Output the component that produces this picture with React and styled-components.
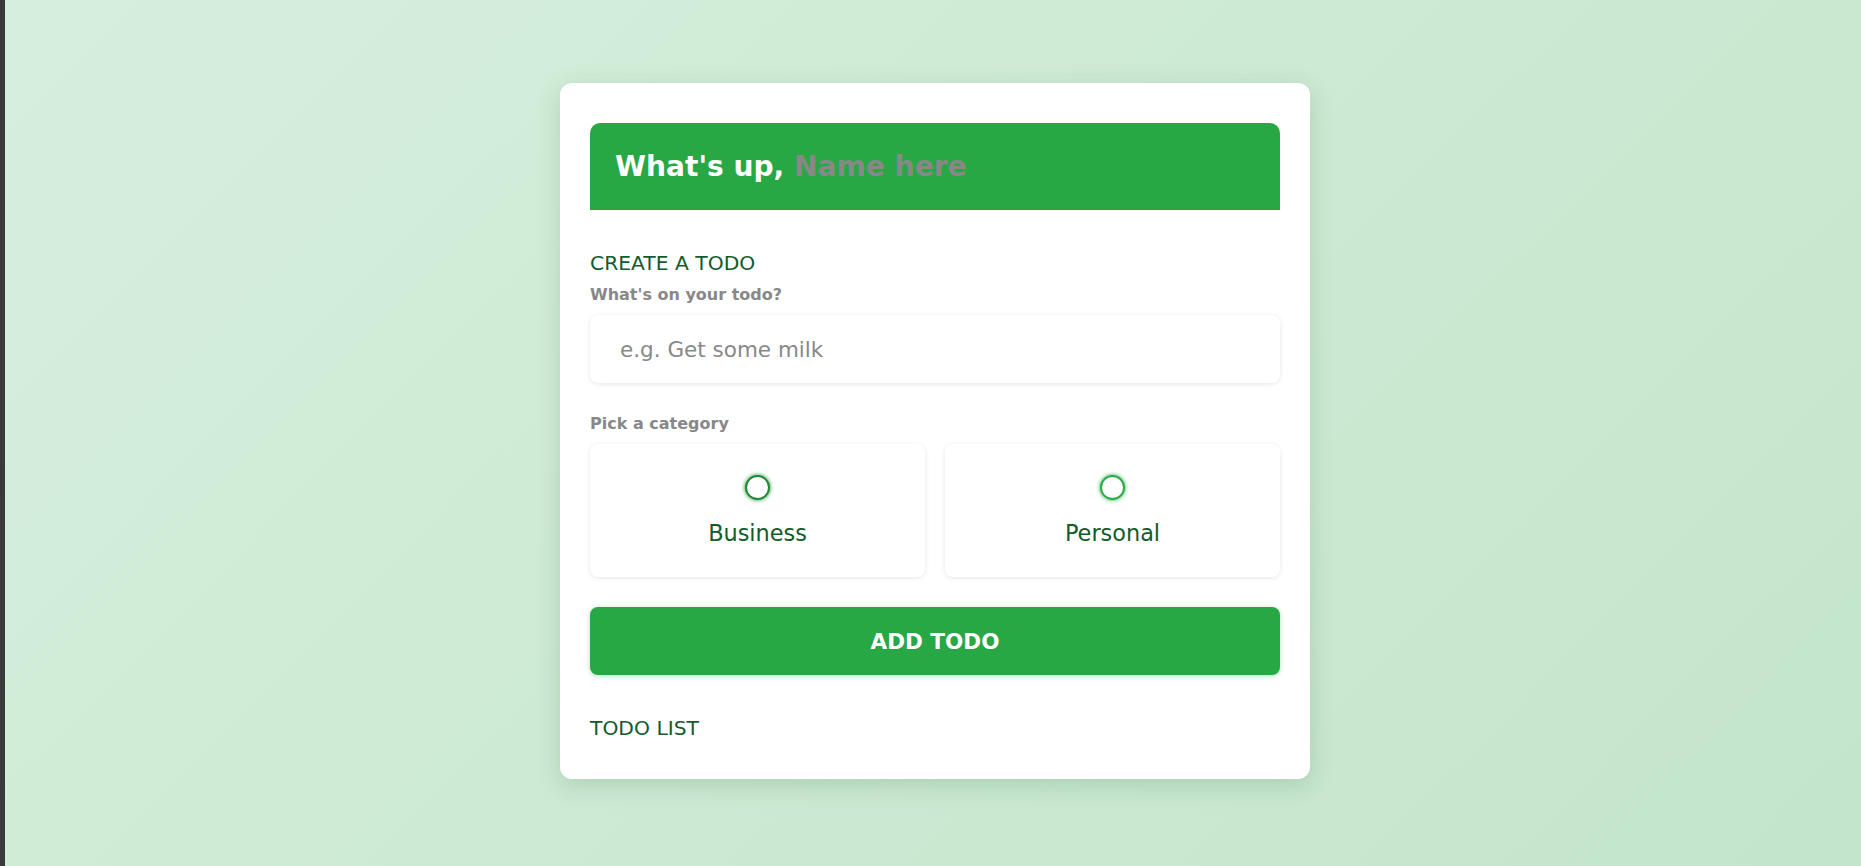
import React, { useState } from 'react';
import styled, { createGlobalStyle } from 'styled-components';

const GlobalStyle = createGlobalStyle`
  * { box-sizing: border-box; margin: 0; padding: 0; }
  body {
    font-family: "DejaVu Sans", "Open Sans", sans-serif;
    border-left: 5px solid #3a3a3a;
    background: linear-gradient(135deg, #d6efdd 0%, #c3e5cb 100%);
    min-height: 100vh;
  }
`;

const Page = styled.main`
  min-height: 100vh;
  display: flex;
  justify-content: center;
  align-items: flex-start;
  padding-top: 83px;
  padding-left: 4px;
`;

const Card = styled.div`
  width: 750px;
  background: #fff;
  border-radius: 12px;
  padding: 40px 30px 39px;
  box-shadow: 0 6px 24px rgba(40, 90, 50, 0.18);
`;

const Greeting = styled.header`
  height: 87px;
  display: flex;
  align-items: center;
  padding: 0 25px;
  background: #28a745;
  border-radius: 10px 10px 0 0;
  h2 {
    font-size: 28.1px;
    font-weight: 700;
    color: #fff;
  }
  span {
    color: #888;
  }
`;

const Section = styled.section`
  margin-top: ${(p) => p.$top || 0}px;
`;

const SectionTitle = styled.h3`
  font-size: 20.3px;
  font-weight: 400;
  line-height: 24px;
  color: #125b2a;
  text-transform: uppercase;
`;

const Label = styled.h4`
  font-size: 16px;
  font-weight: 700;
  line-height: 20px;
  color: #888;
  margin-top: ${(p) => p.$top || 0}px;
  margin-bottom: 10px;
`;

const Input = styled.input`
  display: block;
  width: 100%;
  height: 68px;
  border: none;
  outline: none;
  border-radius: 8px;
  padding: 0 30px;
  font-family: inherit;
  font-size: 21.5px;
  color: #333;
  background: #fff;
  box-shadow: 0 1px 5px rgba(0, 0, 0, 0.1);
  &::placeholder { color: #888; }
`;

const Options = styled.div`
  display: grid;
  grid-template-columns: 1fr 1fr;
  gap: 20px;
`;

const Option = styled.label`
  height: 133px;
  display: flex;
  flex-direction: column;
  align-items: center;
  justify-content: center;
  gap: 20px;
  background: #fff;
  border-radius: 8px;
  box-shadow: 0 1px 5px rgba(0, 0, 0, 0.1);
  cursor: pointer;
  input { display: none; }
  p {
    font-size: 22.4px;
    line-height: 26px;
    color: #125b2a;
  }
`;

const Bubble = styled.span`
  width: 25px;
  height: 25px;
  border-radius: 50%;
  border: 2px solid ${(p) => p.$color};
  box-shadow: 0 0 4px ${(p) => p.$color};
  background: ${(p) => (p.$checked ? p.$color : '#fff')};
`;

const AddButton = styled.button`
  display: block;
  width: 100%;
  height: 68px;
  margin-top: 30px;
  border: none;
  border-radius: 8px;
  background: #28a745;
  color: #fff;
  font-family: inherit;
  font-size: 21.5px;
  font-weight: 700;
  text-transform: uppercase;
  box-shadow: 0 1px 5px rgba(40, 167, 69, 0.35);
  cursor: pointer;
`;

export default function App() {
  const [todo, setTodo] = useState('');
  const [category, setCategory] = useState(null);

  const categories = [
    { id: 'business', label: 'Business', color: '#1e8a35' },
    { id: 'personal', label: 'Personal', color: '#2aac48' },
  ];

  return (
    <>
      <GlobalStyle />
      <Page>
        <Card>
          <Greeting>
            <h2>
              What's up, <span>Name here</span>
            </h2>
          </Greeting>

          <Section $top={41}>
            <SectionTitle>Create a todo</SectionTitle>
            <form onSubmit={(e) => e.preventDefault()}>
              <Label $top={10}>What's on your todo?</Label>
              <Input
                type="text"
                placeholder="e.g. Get some milk"
                value={todo}
                onChange={(e) => setTodo(e.target.value)}
              />

              <Label $top={31}>Pick a category</Label>
              <Options>
                {categories.map((c) => (
                  <Option key={c.id}>
                    <input
                      type="radio"
                      name="category"
                      value={c.id}
                      checked={category === c.id}
                      onChange={() => setCategory(c.id)}
                    />
                    <Bubble $color={c.color} $checked={category === c.id} />
                    <p>{c.label}</p>
                  </Option>
                ))}
              </Options>

              <AddButton type="submit">Add todo</AddButton>
            </form>
          </Section>

          <Section $top={41}>
            <SectionTitle>Todo list</SectionTitle>
          </Section>
        </Card>
      </Page>
    </>
  );
}
